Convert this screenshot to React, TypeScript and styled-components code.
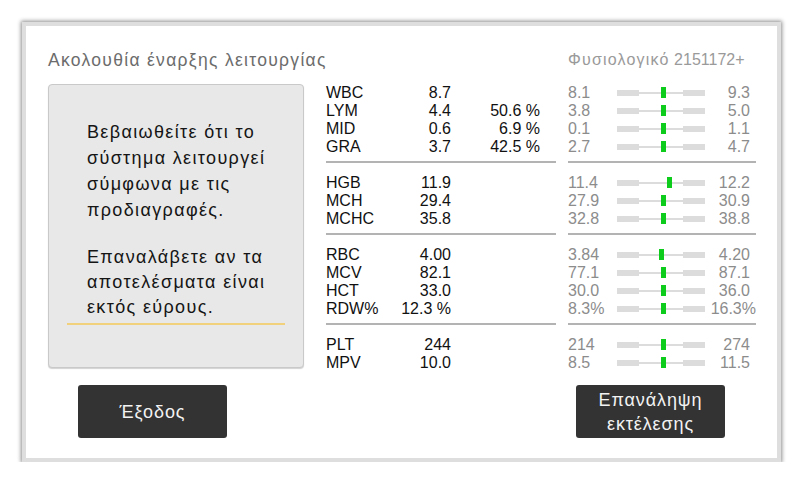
import React from "react";
import styled, { createGlobalStyle } from "styled-components";

const Global = createGlobalStyle`
  html, body { margin: 0; padding: 0; background: #ffffff; }
  body { font-family: "Liberation Sans", Arial, sans-serif; }
  * { box-sizing: border-box; }
`;

const Window = styled.div`
  margin: 22px 0 0 22px;
  width: 759px;
  height: 440px;
  border: 4px solid #dedede;
  box-shadow: 0 0 4px 1px rgba(0, 0, 0, 0.45);
  background: #fff;
  padding: 24px 0 0 22px;
  display: grid;
  grid-template-columns: 278px 242px 188px;
  grid-template-rows: 20px 288px auto;
  row-gap: 14px;
`;

const Title = styled.div`
  grid-column: 1 / 3;
  font-size: 17.5px;
  letter-spacing: 1.3px;
  line-height: 20px;
  color: #6c6c6c;
`;

const NormalLabel = styled.div`
  font-size: 16px;
  line-height: 20px;
  color: #9a9a9a;
`;

const GreekWord = styled.span`
  letter-spacing: 1.2px;
`;

const Panel = styled.div`
  width: 256px;
  height: 284px;
  background: #e8e8e8;
  border: 1px solid #c9c9c9;
  border-radius: 4px;
  box-shadow: 0 1px 1px rgba(0, 0, 0, 0.18);
  padding: 34px 18px 0 18px;
  font-size: 18px;
  letter-spacing: 1.35px;
  color: #151515;
`;

const Para = styled.p<{ $lh: number }>`
  margin: 0 0 0 20px;
  line-height: ${(p) => p.$lh}px;
  & + & {
    margin-top: 22px;
  }
`;

const YellowRule = styled.div`
  margin-top: 3px;
  height: 2px;
  background: #f1d17c;
`;

const Column = styled.div<{ $width: number }>`
  width: ${(p) => p.$width}px;
`;

const Group = styled.div`
  padding-bottom: 5px;
  margin-bottom: 11px;
  border-bottom: 2px solid #b3b3b3;
  &:last-child {
    border-bottom: none;
    margin-bottom: 0;
    padding-bottom: 0;
  }
`;

const ResultRow = styled.div`
  display: grid;
  grid-template-columns: 70px 55px 89px;
  height: 18px;
  line-height: 18px;
  font-size: 16px;
  color: #111;
`;

const Cell = styled.span<{ $align?: "left" | "right" }>`
  text-align: ${(p) => p.$align || "left"};
  white-space: nowrap;
`;

const RangeRow = styled.div`
  display: grid;
  grid-template-columns: 49px 88px 1fr;
  align-items: center;
  height: 18px;
  line-height: 18px;
  font-size: 16px;
  color: #8c8c8c;
`;

const MaxCell = styled.span<{ $wide?: boolean }>`
  text-align: right;
  white-space: nowrap;
  padding-right: ${(p) => (p.$wide ? 0 : 6)}px;
`;

const Bar = styled.div`
  position: relative;
  display: flex;
  align-items: center;
  height: 18px;
`;

const Thick = styled.div`
  width: 22px;
  height: 6px;
  background: #dcdcdc;
`;

const Thin = styled.div`
  flex: 1;
  height: 2px;
  background: #dcdcdc;
`;

const Marker = styled.div`
  position: absolute;
  top: 3px;
  width: 5px;
  height: 11px;
  background: #0dcc1c;
`;

const ButtonCell = styled.div<{ $col?: string }>`
  grid-column: ${(p) => p.$col || "auto"};
  margin-top: -1px;
`;

const Button = styled.button<{ $offset: number }>`
  margin-left: ${(p) => p.$offset}px;
  width: 149px;
  height: 53px;
  border: none;
  border-radius: 3px;
  background: #333333;
  color: #f2f2f2;
  font-family: "Liberation Sans", Arial, sans-serif;
  font-size: 18px;
  letter-spacing: 0.9px;
  line-height: 24px;
  padding: 0;
  display: flex;
  flex-direction: column;
  align-items: center;
  justify-content: center;
`;

type Result = {
  name: string;
  value: string;
  pct?: string;
  min: string;
  max: string;
  lo: number;
  hi: number;
  v: number;
};

const groups: Result[][] = [
  [
    { name: "WBC", value: "8.7", min: "8.1", max: "9.3", lo: 8.1, hi: 9.3, v: 8.7 },
    { name: "LYM", value: "4.4", pct: "50.6 %", min: "3.8", max: "5.0", lo: 3.8, hi: 5.0, v: 4.4 },
    { name: "MID", value: "0.6", pct: "6.9 %", min: "0.1", max: "1.1", lo: 0.1, hi: 1.1, v: 0.6 },
    { name: "GRA", value: "3.7", pct: "42.5 %", min: "2.7", max: "4.7", lo: 2.7, hi: 4.7, v: 3.7 },
  ],
  [
    { name: "HGB", value: "11.9", min: "11.4", max: "12.2", lo: 11.4, hi: 12.2, v: 11.9 },
    { name: "MCH", value: "29.4", min: "27.9", max: "30.9", lo: 27.9, hi: 30.9, v: 29.4 },
    { name: "MCHC", value: "35.8", min: "32.8", max: "38.8", lo: 32.8, hi: 38.8, v: 35.8 },
  ],
  [
    { name: "RBC", value: "4.00", min: "3.84", max: "4.20", lo: 3.84, hi: 4.2, v: 4.0 },
    { name: "MCV", value: "82.1", min: "77.1", max: "87.1", lo: 77.1, hi: 87.1, v: 82.1 },
    { name: "HCT", value: "33.0", min: "30.0", max: "36.0", lo: 30, hi: 36, v: 33 },
    { name: "RDW%", value: "12.3 %", min: "8.3%", max: "16.3%", lo: 8.3, hi: 16.3, v: 12.3 },
  ],
  [
    { name: "PLT", value: "244", min: "214", max: "274", lo: 214, hi: 274, v: 244 },
    { name: "MPV", value: "10.0", min: "8.5", max: "11.5", lo: 8.5, hi: 11.5, v: 10 },
  ],
];

export default function App() {
  return (
    <>
      <Global />
      <Window>
        <Title>Ακολουθία έναρξης λειτουργίας</Title>
        <NormalLabel>
          <GreekWord>Φυσιολογικό</GreekWord> 2151172+
        </NormalLabel>

        <Panel>
          <Para $lh={26}>
            Βεβαιωθείτε ότι το
            <br />
            σύστημα λειτουργεί
            <br />
            σύμφωνα με τις
            <br />
            προδιαγραφές.
          </Para>
          <Para $lh={25}>
            Επαναλάβετε αν τα
            <br />
            αποτελέσματα είναι
            <br />
            εκτός εύρους.
          </Para>
          <YellowRule />
        </Panel>

        <Column $width={230}>
          {groups.map((g, i) => (
            <Group key={i}>
              {g.map((r) => (
                <ResultRow key={r.name}>
                  <Cell>{r.name}</Cell>
                  <Cell $align="right">{r.value}</Cell>
                  <Cell $align="right">{r.pct || ""}</Cell>
                </ResultRow>
              ))}
            </Group>
          ))}
        </Column>

        <Column $width={188}>
          {groups.map((g, i) => (
            <Group key={i}>
              {g.map((r) => {
                const f = (r.v - r.lo) / (r.hi - r.lo);
                return (
                  <RangeRow key={r.name}>
                    <Cell>{r.min}</Cell>
                    <Bar>
                      <Thick />
                      <Thin />
                      <Thick />
                      <Marker style={{ left: `${22 + f * 44}px` }} />
                    </Bar>
                    <MaxCell $wide={r.max.length > 4}>{r.max}</MaxCell>
                  </RangeRow>
                );
              })}
            </Group>
          ))}
        </Column>

        <ButtonCell $col="1 / 3">
          <Button $offset={30}>Έξοδος</Button>
        </ButtonCell>
        <ButtonCell>
          <Button $offset={8}>
            <span>Επανάληψη</span>
            <span>εκτέλεσης</span>
          </Button>
        </ButtonCell>
      </Window>
    </>
  );
}
